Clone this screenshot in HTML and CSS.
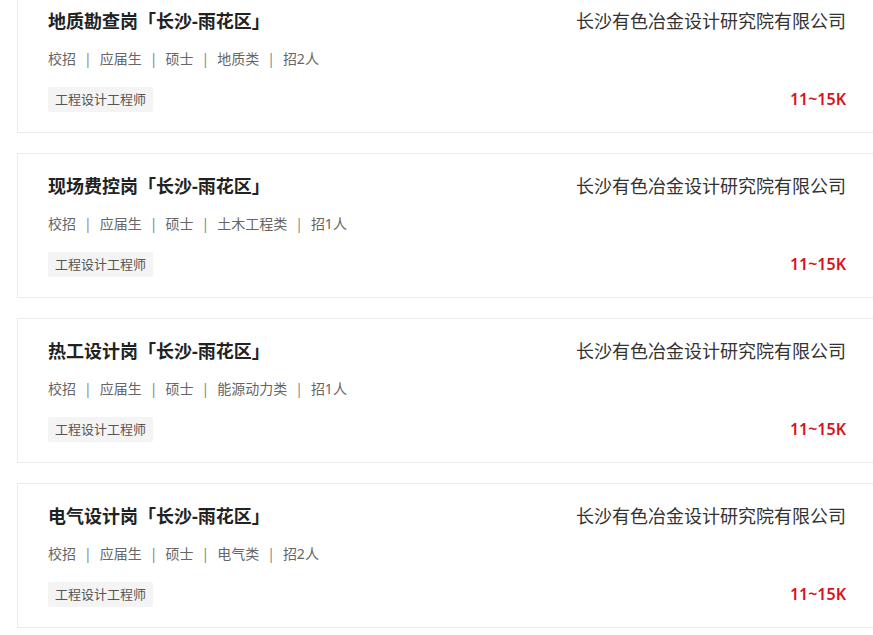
FILE: index.html
```html
<!DOCTYPE html>
<html lang="zh-CN">
<head>
  <meta charset="UTF-8">
  <title>校招职位</title>
  <link rel="stylesheet" href="styles.css">
</head>
<body>

  <ul class="lista">
    <li class="puesto">
      <div class="izq">
        <h3 class="titulo">地质勘查岗「长沙-雨花区」</h3>
        <p class="meta">校招<span class="sep">|</span>应届生<span class="sep">|</span>硕士<span class="sep">|</span>地质类<span class="sep">|</span>招2人</p>
        <span class="tag">工程设计工程师</span>
      </div>
      <div class="der">
        <p class="empresa">长沙有色冶金设计研究院有限公司</p>
        <p class="salario">11~15K</p>
      </div>
    </li>

    <li class="puesto">
      <div class="izq">
        <h3 class="titulo">现场费控岗「长沙-雨花区」</h3>
        <p class="meta">校招<span class="sep">|</span>应届生<span class="sep">|</span>硕士<span class="sep">|</span>土木工程类<span class="sep">|</span>招1人</p>
        <span class="tag">工程设计工程师</span>
      </div>
      <div class="der">
        <p class="empresa">长沙有色冶金设计研究院有限公司</p>
        <p class="salario">11~15K</p>
      </div>
    </li>

    <li class="puesto">
      <div class="izq">
        <h3 class="titulo">热工设计岗「长沙-雨花区」</h3>
        <p class="meta">校招<span class="sep">|</span>应届生<span class="sep">|</span>硕士<span class="sep">|</span>能源动力类<span class="sep">|</span>招1人</p>
        <span class="tag">工程设计工程师</span>
      </div>
      <div class="der">
        <p class="empresa">长沙有色冶金设计研究院有限公司</p>
        <p class="salario">11~15K</p>
      </div>
    </li>

    <li class="puesto">
      <div class="izq">
        <h3 class="titulo">电气设计岗「长沙-雨花区」</h3>
        <p class="meta">校招<span class="sep">|</span>应届生<span class="sep">|</span>硕士<span class="sep">|</span>电气类<span class="sep">|</span>招2人</p>
        <span class="tag">工程设计工程师</span>
      </div>
      <div class="der">
        <p class="empresa">长沙有色冶金设计研究院有限公司</p>
        <p class="salario">11~15K</p>
      </div>
    </li>
  </ul>

</body>
</html>
```

FILE: styles.css
```css
body {
  margin: 0;
  background-color: #fff;
  font-family: "Noto Sans", "Noto Sans CJK SC", sans-serif;
  overflow: hidden;
}

.lista {
  list-style: none;
  margin: -12px 0 0 17px;
  padding: 0;
  width: 860px;
  display: flex;
  flex-direction: column;
  gap: 20px;
}

.puesto {
  display: flex;
  justify-content: space-between;
  border: 1px solid #ebebeb;
  background-color: #fff;
  padding: 19px 30px 20px 30px;
}

.izq {
  display: flex;
  flex-direction: column;
  align-items: flex-start;
}

.titulo {
  margin: 0;
  font-size: 18px;
  line-height: 26px;
  font-weight: bold;
  color: #222;
}

.meta {
  margin: 15px 0 0;
  font-size: 14px;
  line-height: 20px;
  color: #666;
}

.sep {
  margin: 0 8px;
  color: #888;
}

.tag {
  margin-top: 18px;
  height: 25px;
  line-height: 25px;
  padding: 0 7px;
  font-size: 13px;
  color: #555;
  background-color: #f4f4f4;
  border-radius: 2px;
}

.der {
  display: flex;
  flex-direction: column;
  justify-content: space-between;
  align-items: flex-end;
}

.empresa {
  margin: 0;
  font-size: 18px;
  line-height: 26px;
  color: #333;
}

.salario {
  margin: 0 0 2px;
  font-size: 16px;
  line-height: 22px;
  font-weight: 600;
  color: #d7141b;
}
```
